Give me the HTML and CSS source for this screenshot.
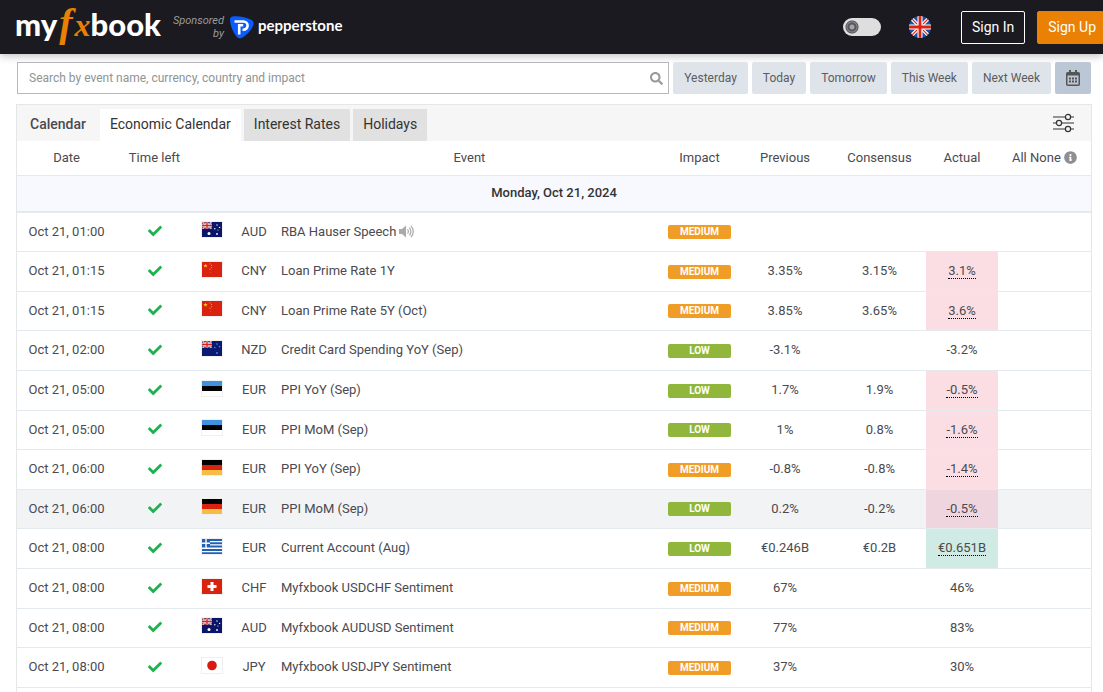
FILE: index.html
```html
<!DOCTYPE html>
<html lang="en">
<head>
  <meta charset="UTF-8">
  <meta name="viewport" content="width=device-width, initial-scale=1">
  <title>Economic Calendar</title>
  <link rel="stylesheet" href="styles.css">
</head>
<body>
  <!-- shared icons and flags -->
  <svg class="sprite" aria-hidden="true">
    <symbol id="check" viewBox="0 0 512 512"><path fill="currentColor" d="M173.898 439.404l-166.4-166.4c-9.997-9.997-9.997-26.206 0-36.204l36.203-36.204c9.997-9.998 26.207-9.998 36.204 0L192 312.69 432.095 72.596c9.997-9.997 26.207-9.997 36.204 0l36.203 36.204c9.997 9.997 9.997 26.206 0 36.204l-294.4 294.401c-9.998 9.997-26.207 9.997-36.204-.001z"/></symbol>
    <symbol id="jack" viewBox="0 0 20 14">
      <path fill="#12196b" d="M0 0h20v14H0z"/>
      <path stroke="#fff" stroke-width="3.4" d="M0 0l20 14M20 0L0 14"/>
      <path stroke="#d8231c" stroke-width="1.4" d="M0 0l20 14M20 0L0 14"/>
      <path stroke="#fff" stroke-width="5" d="M10 0v14M0 7h20"/>
      <path stroke="#d8231c" stroke-width="2.8" d="M10 0v14M0 7h20"/>
    </symbol>
    <symbol id="au" viewBox="0 0 20 15">
      <path fill="#0a1468" d="M0 0h20v15H0z"/>
      <use href="#jack" width="10" height="7"/>
      <g fill="#fff"><circle cx="7" cy="11.5" r="1.5"/><circle cx="15" cy="3" r=".7"/><circle cx="12.8" cy="6.8" r=".7"/><circle cx="17.6" cy="5.4" r=".7"/><circle cx="16" cy="8" r=".5"/><circle cx="15" cy="12" r=".9"/></g>
    </symbol>
    <symbol id="nz" viewBox="0 0 20 15">
      <path fill="#0a1a72" d="M0 0h20v15H0z"/>
      <use href="#jack" width="10" height="7"/>
      <g fill="#4f8fc4"><circle cx="15" cy="3" r=".8"/><circle cx="12.8" cy="6.5" r=".8"/><circle cx="17.6" cy="5.6" r=".8"/><circle cx="15" cy="12" r=".9"/></g>
    </symbol>
    <symbol id="cn" viewBox="0 0 20 15">
      <path fill="#d9230f" d="M0 0h20v15H0z"/>
      <path fill="#f8c21c" d="M3.5 1.8l.6 1.3 1.5.1-1.1 1 .3 1.4-1.3-.8-1.3.8.3-1.4-1.1-1 1.5-.1z"/>
      <g fill="#f0a020"><circle cx="8" cy="1.8" r=".6"/><circle cx="9.6" cy="3.4" r=".6"/><circle cx="9.6" cy="5.6" r=".6"/><circle cx="8" cy="7.2" r=".6"/><circle cx="8.6" cy="10.6" r=".4"/></g>
    </symbol>
    <symbol id="ee" viewBox="0 0 20 15"><path fill="#fff" d="M0 0h20v15H0z"/><path fill="#3f92e0" d="M0 0h20v5H0z"/><path d="M0 5h20v5H0z"/></symbol>
    <symbol id="de" viewBox="0 0 20 15"><path fill="#f6bd45" d="M0 0h20v15H0z"/><path fill="#d9230f" d="M0 0h20v10H0z"/><path d="M0 0h20v5H0z"/></symbol>
    <symbol id="gr" viewBox="0 0 20 15">
      <path fill="#2260b4" d="M0 0h20v15H0z"/>
      <path stroke="#fff" stroke-width="1.4" d="M8 2.6h12M8 5.9h12M0 9.3h20M0 12.6h20M4 0v8.4M0 4.2h8"/>
    </symbol>
    <symbol id="ch" viewBox="0 0 20 15"><path fill="#d9230f" d="M0 0h20v15H0z"/><path stroke="#fff" stroke-width="3" d="M10 3v9M5.5 7.5h9"/></symbol>
    <symbol id="jp" viewBox="0 0 20 15"><path fill="#fff" d="M0 0h20v15H0z"/><circle cx="10" cy="7.5" r="4.8" fill="#d91a10"/></symbol>
  </svg>

  <header class="topbar">
    <a class="logo" href="#">my<span class="logo-f">f</span><span class="logo-x">x</span>book</a>
    <div class="sponsor">
      <span class="sponsor-text">Sponsored<br>by</span>
      <a class="sponsor-link" href="#">
        <svg width="24" height="23" viewBox="0 0 24 23">
          <path fill="#0a5cff" d="M0 4C0 1 2 .3 4 .2 11 0 17 1.500 21.500 4 23.500 5 24 7 23.400 9 21.500 14 17 19 12 21.800 10 22.800 8 22.500 6.500 20.500 2.500 15.500.3 9.500 0 4z"/>
          <path fill="none" stroke="#fff" stroke-width="2.600" d="M4.500 5.500h9a4 4 0 0 1 0 8.200h-1M9.200 18.500V9.200h4"/>
        </svg>
        <span class="sponsor-name">pepperstone</span>
      </a>
    </div>
    <div class="account">
      <input class="theme-toggle" type="checkbox" aria-label="Dark mode">
      <button class="lang" aria-label="Language: English">
        <svg width="22" height="22" viewBox="0 0 22 22">
          <clipPath id="round"><circle cx="11" cy="11" r="11"/></clipPath>
          <g clip-path="url(#round)">
            <path fill="#1b52a8" d="M0 0h22v22H0z"/>
            <path stroke="#fff" stroke-width="3.400" d="M0 0l22 22M22 0L0 22"/>
            <path stroke="#dd2211" stroke-width="1.200" d="M0 0l22 22M22 0L0 22"/>
            <path stroke="#fff" stroke-width="5" d="M11 0v22M0 11h22"/>
            <path stroke="#dd2211" stroke-width="2.800" d="M11 0v22M0 11h22"/>
          </g>
        </svg>
      </button>
      <button class="sign sign-in">Sign In</button>
      <button class="sign sign-up">Sign Up</button>
    </div>
  </header>

  <div class="toolbar">
    <div class="search">
      <input type="text" placeholder="Search by event name, currency, country and impact" aria-label="Search events">
      <svg class="search-icon" width="13" height="13" viewBox="0 0 512 512"><path fill="currentColor" d="M505 442.700L405.300 343c-4.500-4.500-10.600-7-17-7H372c27.600-35.300 44-79.700 44-128C416 93.100 322.900 0 208 0S0 93.100 0 208s93.100 208 208 208c48.300 0 92.700-16.400 128-44v16.300c0 6.400 2.500 12.500 7 17l99.700 99.700c9.400 9.400 24.600 9.400 33.900 0l28.300-28.300c9.400-9.400 9.400-24.600.1-34zM208 336c-70.700 0-128-57.200-128-128 0-70.700 57.200-128 128-128 70.700 0 128 57.200 128 128 0 70.700-57.200 128-128 128z"/></svg>
    </div>
    <button class="range">Yesterday</button>
    <button class="range">Today</button>
    <button class="range">Tomorrow</button>
    <button class="range">This Week</button>
    <button class="range">Next Week</button>
    <button class="range range-pick" aria-label="Pick dates">
      <svg width="14" height="16" viewBox="0 0 14 16">
        <rect x=".75" y="2.750" width="12.500" height="12.500" rx="1" fill="none" stroke="#555" stroke-width="1.500"/>
        <path fill="#555" d="M1 3h12v2.500H1zM3 0h2v3H3zM9 0h2v3H9zM3 7.500h2v2H3zM6 7.500h2v2H6zM9 7.500h2v2H9zM3 10.500h2v2H3zM6 10.500h2v2H6zM9 10.500h2v2H9z"/>
      </svg>
    </button>
  </div>

  <main class="panel">
    <div class="tabs">
      <h1>Calendar</h1>
      <button class="tab active">Economic Calendar</button>
      <button class="tab">Interest Rates</button>
      <button class="tab">Holidays</button>
      <button class="filter" aria-label="Filter">
        <svg width="21" height="20" viewBox="0 0 21 20" fill="none" stroke="#333" stroke-width="1.200">
          <path d="M0 4h12M18 4h3M0 10h3M9 10h12M0 16h12M18 16h3"/>
          <circle cx="15" cy="4" r="2.600"/><circle cx="6" cy="10" r="2.600"/><circle cx="15" cy="16" r="2.600"/>
        </svg>
      </button>
    </div>

    <table class="events">
      <colgroup>
        <col class="c-date"><col class="c-left"><col class="c-flag"><col class="c-cur"><col>
        <col class="c-impact"><col class="c-prev"><col class="c-cons"><col class="c-actual"><col class="c-all">
      </colgroup>
      <thead>
        <tr>
          <th>Date</th><th>Time left</th><th></th><th></th><th>Event</th><th>Impact</th><th>Previous</th><th>Consensus</th><th>Actual</th>
          <th><a href="#">All</a> <a href="#">None</a> <svg class="info" width="13" height="13" viewBox="0 0 512 512"><path fill="currentColor" d="M256 8C119.043 8 8 119.083 8 256c0 136.997 111.043 248 248 248s248-111.003 248-248C504 119.083 392.957 8 256 8zm0 110c23.196 0 42 18.804 42 42s-18.804 42-42 42-42-18.804-42-42 18.804-42 42-42zm56 254c0 6.627-5.373 12-12 12h-88c-6.627 0-12-5.373-12-12v-24c0-6.627 5.373-12 12-12h12v-64h-12c-6.627 0-12-5.373-12-12v-24c0-6.627 5.373-12 12-12h64c6.627 0 12 5.373 12 12v100h12c6.627 0 12 5.373 12 12v24z"/></svg></th>
        </tr>
      </thead>
      <tbody>
        <tr class="day"><th colspan="10">Monday, Oct 21, 2024</th></tr>
      </tbody>
      <tbody class="rows">
        <tr>
          <td>Oct 21, 01:00</td><td><svg class="check"><use href="#check"/></svg></td><td><svg class="flag"><use href="#au"/></svg></td><td>AUD</td>
          <td class="name">RBA Hauser Speech <svg class="speaker" width="15" height="13" viewBox="0 0 15 13"><path fill="#aaa" d="M0 4h3l4-3.500v12L3 9H0z"/><path fill="none" stroke="#aaa" stroke-width="1.200" d="M8.500 4.300q1.800 2.200 0 4.400M10.300 2.600q3.300 3.900 0 7.800M12 .8q4.600 5.700 0 11.400"/></svg></td>
          <td><span class="impact medium">MEDIUM</span></td><td></td><td></td><td></td><td></td>
        </tr>
        <tr>
          <td>Oct 21, 01:15</td><td><svg class="check"><use href="#check"/></svg></td><td><svg class="flag"><use href="#cn"/></svg></td><td>CNY</td>
          <td class="name">Loan Prime Rate 1Y</td>
          <td><span class="impact medium">MEDIUM</span></td><td>3.35%</td><td>3.15%</td><td class="worse"><span>3.1%</span></td><td></td>
        </tr>
        <tr>
          <td>Oct 21, 01:15</td><td><svg class="check"><use href="#check"/></svg></td><td><svg class="flag"><use href="#cn"/></svg></td><td>CNY</td>
          <td class="name">Loan Prime Rate 5Y (Oct)</td>
          <td><span class="impact medium">MEDIUM</span></td><td>3.85%</td><td>3.65%</td><td class="worse"><span>3.6%</span></td><td></td>
        </tr>
        <tr>
          <td>Oct 21, 02:00</td><td><svg class="check"><use href="#check"/></svg></td><td><svg class="flag"><use href="#nz"/></svg></td><td>NZD</td>
          <td class="name">Credit Card Spending YoY (Sep)</td>
          <td><span class="impact low">LOW</span></td><td>-3.1%</td><td></td><td>-3.2%</td><td></td>
        </tr>
        <tr>
          <td>Oct 21, 05:00</td><td><svg class="check"><use href="#check"/></svg></td><td><svg class="flag"><use href="#ee"/></svg></td><td>EUR</td>
          <td class="name">PPI YoY (Sep)</td>
          <td><span class="impact low">LOW</span></td><td>1.7%</td><td>1.9%</td><td class="worse"><span>-0.5%</span></td><td></td>
        </tr>
        <tr>
          <td>Oct 21, 05:00</td><td><svg class="check"><use href="#check"/></svg></td><td><svg class="flag"><use href="#ee"/></svg></td><td>EUR</td>
          <td class="name">PPI MoM (Sep)</td>
          <td><span class="impact low">LOW</span></td><td>1%</td><td>0.8%</td><td class="worse"><span>-1.6%</span></td><td></td>
        </tr>
        <tr>
          <td>Oct 21, 06:00</td><td><svg class="check"><use href="#check"/></svg></td><td><svg class="flag"><use href="#de"/></svg></td><td>EUR</td>
          <td class="name">PPI YoY (Sep)</td>
          <td><span class="impact medium">MEDIUM</span></td><td>-0.8%</td><td>-0.8%</td><td class="worse"><span>-1.4%</span></td><td></td>
        </tr>
        <tr class="current">
          <td>Oct 21, 06:00</td><td><svg class="check"><use href="#check"/></svg></td><td><svg class="flag"><use href="#de"/></svg></td><td>EUR</td>
          <td class="name">PPI MoM (Sep)</td>
          <td><span class="impact low">LOW</span></td><td>0.2%</td><td>-0.2%</td><td class="worse"><span>-0.5%</span></td><td></td>
        </tr>
        <tr>
          <td>Oct 21, 08:00</td><td><svg class="check"><use href="#check"/></svg></td><td><svg class="flag"><use href="#gr"/></svg></td><td>EUR</td>
          <td class="name">Current Account (Aug)</td>
          <td><span class="impact low">LOW</span></td><td>€0.246B</td><td>€0.2B</td><td class="better"><span>€0.651B</span></td><td></td>
        </tr>
        <tr>
          <td>Oct 21, 08:00</td><td><svg class="check"><use href="#check"/></svg></td><td><svg class="flag"><use href="#ch"/></svg></td><td>CHF</td>
          <td class="name">Myfxbook USDCHF Sentiment</td>
          <td><span class="impact medium">MEDIUM</span></td><td>67%</td><td></td><td>46%</td><td></td>
        </tr>
        <tr>
          <td>Oct 21, 08:00</td><td><svg class="check"><use href="#check"/></svg></td><td><svg class="flag"><use href="#au"/></svg></td><td>AUD</td>
          <td class="name">Myfxbook AUDUSD Sentiment</td>
          <td><span class="impact medium">MEDIUM</span></td><td>77%</td><td></td><td>83%</td><td></td>
        </tr>
        <tr>
          <td>Oct 21, 08:00</td><td><svg class="check"><use href="#check"/></svg></td><td><svg class="flag"><use href="#jp"/></svg></td><td>JPY</td>
          <td class="name">Myfxbook USDJPY Sentiment</td>
          <td><span class="impact medium">MEDIUM</span></td><td>37%</td><td></td><td>30%</td><td></td>
        </tr>
      </tbody>
    </table>
  </main>
</body>
</html>
```

FILE: styles.css
```css
* { box-sizing: border-box; }
body { margin: 0; min-height: 100vh; display: flex; flex-direction: column; background: #fff; color: #4a4a50; font-family: Roboto, Arial, sans-serif; font-size: 13px; }
button { font-family: inherit; border: 0; padding: 0; cursor: pointer; }
a { color: inherit; text-decoration: none; }
.sprite { display: none; }

/* top bar */
.topbar { display: flex; align-items: center; height: 54px; padding-left: 15px; background: #1b1a20; color: #fff; box-shadow: 0 2px 8px rgba(0, 0, 0, 0.25); }
.logo { display: flex; align-items: baseline; padding-bottom: 6px; font: 900 31px/40px Lato, sans-serif; }
.logo-f, .logo-x { color: #ea8004; font-family: "Liberation Serif", serif; font-style: italic; font-weight: 700; }
.logo-f { margin: 0 2px; font-size: 40px; }
.logo-x { font-size: 32px; }
.sponsor { display: flex; align-items: center; gap: 6px; margin-left: 12px; }
.sponsor-text { font-size: 11px; line-height: 13px; font-style: italic; text-align: right; color: #9a9a9e; }
.sponsor-link { display: flex; align-items: center; gap: 4px; font: 700 15px/20px Lato, sans-serif; }
.sponsor-name { padding-bottom: 4px; }
.account { display: flex; align-items: center; margin-left: auto; }
.theme-toggle { appearance: none; width: 38px; height: 18px; margin: 0 28px 0 0; border-radius: 9px; background: radial-gradient(circle at 9px 9px, #a5a5a8 2px, #55555a 3px, #55555a 4px, #8a8a8e 5px, #55555a 6px, #dededf 7px); }
.lang { display: flex; margin-right: 30px; background: none; }
.sign { height: 33px; padding: 0 10px; border: 1px solid #fff; border-radius: 2px; background: none; color: #fff; font-size: 14px; }
.sign-up { margin-left: 12px; padding: 0 6px 0 10px; border-color: #ea8004; border-radius: 2px 0 0 2px; background: #ea8004; }

/* search and date ranges */
.toolbar { display: flex; gap: 4px; padding: 8px 12px 10px 17px; }
.search { position: relative; flex: 1; }
.search input { display: block; width: 100%; height: 32px; padding: 0 32px 0 11px; border: 1px solid #b8b8bb; background: #fff; font-family: inherit; font-size: 12px; }
.search input::placeholder { color: #8d9494; }
.search-icon { position: absolute; right: 6px; top: 10px; color: #999; }
.range { height: 32px; padding: 0 11px; border-radius: 2px; background: #dfe4eb; color: #5c5c60; font-size: 12px; }
.range-pick { display: flex; align-items: center; background: #bcc7d6; }

/* calendar panel */
.panel { flex: 1; margin: 0 11px 0 16px; border: 1px solid #e4e6e8; border-bottom: 0; }
.tabs { display: flex; align-items: flex-end; height: 36px; background: #f6f6f6; }
.tabs h1 { margin: 0; padding: 0 14px 0 13px; font-size: 14px; line-height: 33px; font-weight: 500; }
.tab { height: 32px; margin-right: 3px; padding: 0 10px 2px; background: #e1e1e1; color: #333; font-size: 14px; }
.tab.active { background: #fff; }
.filter { display: flex; align-self: center; margin: 0 17px 0 auto; background: none; }

.events { width: 100%; table-layout: fixed; border-collapse: separate; border-spacing: 0; text-align: center; }
.c-date { width: 99px; }
.c-left { width: 77px; }
.c-flag { width: 38px; }
.c-cur { width: 46px; }
.c-impact { width: 75px; }
.c-prev { width: 96px; }
.c-cons { width: 93px; }
.c-actual { width: 72px; }
.c-all { width: 93px; }
.events th, .events td { padding: 0 0 2px; border-bottom: 1px solid #e4e9ed; white-space: nowrap; }
.events thead th { height: 35px; font-weight: 400; }
.events .day th { height: 37px; border-bottom-width: 2px; background: #f7f9ff; color: #333; font-weight: 500; }
.info { color: #8e8e93; vertical-align: -2px; }

.rows td { height: 40px; }
.rows tr:nth-child(5n+1) td, .rows tr:nth-child(5n+3) td { height: 39px; }
.rows .name { padding-left: 4px; text-align: left; }
.rows .current td { background: #f2f3f5; }
.check { display: block; width: 14px; height: 14px; margin: 0 auto; color: #1eb150; }
.flag { display: block; width: 22px; height: 17px; margin: 0 auto 3px; border: 1px solid #f0f0f0; }
.speaker { margin-left: -1px; vertical-align: -2px; }
.impact { display: block; width: 63px; height: 14px; margin: 2px auto 0; border-radius: 2px; color: #fff; font-size: 10px; line-height: 14px; font-weight: 700; }
.medium { background: #f09d28; }
.low { background: #90b73b; }
.rows .worse { background: #fbdee4; }
.rows .current .worse { background: #efd5de; }
.rows .better { background: #d0ebe3; }
.worse span, .better span { border-bottom: 1px dotted #000; }
```
